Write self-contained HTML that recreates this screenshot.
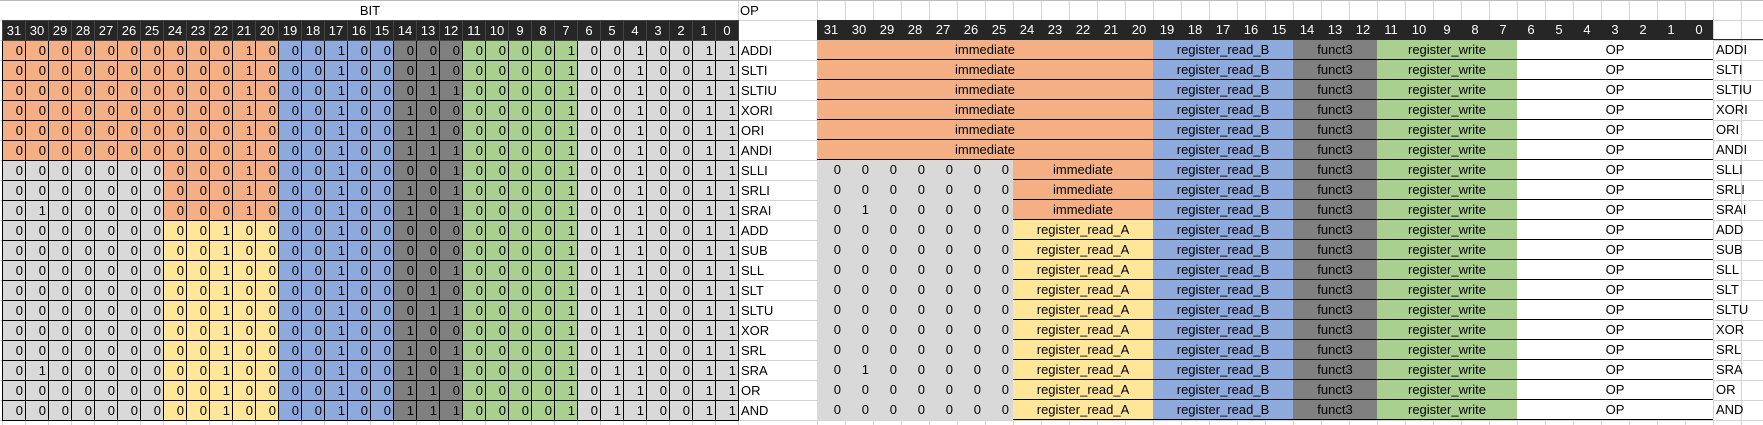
<!DOCTYPE html>
<html><head><meta charset="utf-8"><style>
body{margin:0;width:1763px;height:425px;overflow:hidden;position:relative;background:#fff;font-family:"Liberation Sans",sans-serif;font-size:13px;color:#000}
.g1{position:absolute;left:738px;top:0;width:79px;height:425px;background-image:linear-gradient(#d4d4d4 1px,transparent 1px),linear-gradient(90deg,#d4d4d4 1px,transparent 1px);background-size:79px 20px;background-position:0 0}
.g2{position:absolute;left:817px;top:0;width:946px;height:425px;background-image:linear-gradient(#d4d4d4 1px,transparent 1px),linear-gradient(90deg,#d4d4d4 1px,transparent 1px);background-size:28px 20px;background-position:0 0}
.g0{position:absolute;left:0;top:0;width:738px;height:425px;background-image:linear-gradient(#d4d4d4 1px,transparent 1px),linear-gradient(90deg,#d4d4d4 1px,transparent 1px);background-size:23px 20px;background-position:2px 0}
.top{position:absolute;left:2px;top:1px;width:736px;height:19px;background:#fff;text-align:center;line-height:19px}
.op{position:absolute;left:740px;top:1px;line-height:19px}
.tl{position:absolute;left:0;top:0;width:1763px;height:1px;background:#bbb}
table{position:absolute;border-collapse:collapse;table-layout:fixed}
#L{left:2px;top:20px}
#L td{width:20px;height:19px;padding:0 2px 0 0;box-sizing:content-box;border:1px solid #000;text-align:right;background:#d9d9d9;line-height:19px;overflow:hidden;white-space:nowrap}
#L tr.h td{background:#262626;color:#fff;text-align:center;padding:0;width:22px;border-color:#444}
#L td.lb{background:transparent;border:none;text-align:left;padding:0 0 0 2px;width:60px}
#L tr.h td.lb{background:transparent}
#L tr.i td:nth-child(-n+12),#L tr.s td:nth-child(n+8):nth-child(-n+12){background:#f4b084}
#L tr.r td:nth-child(n+8):nth-child(-n+12){background:#ffe699}
#L tr td:nth-child(n+13):nth-child(-n+17){background:#8ea9db}
#L tr td:nth-child(n+18):nth-child(-n+20){background:#808080}
#L tr td:nth-child(n+21):nth-child(-n+25){background:#a9d08e}
#L tr.h td:nth-child(-n+32){background:#262626}
#R{left:817px;top:20px}
#R td{height:19px;padding:0;border:none;border-bottom:1px solid #000;text-align:center;line-height:19px;white-space:nowrap;overflow:hidden}
#R tr.h td{background:#262626;color:#fff;width:28px;border-bottom:1px solid #262626}
#R tr.h td.lb{background:transparent}
#R td.lb{text-align:left;padding-left:3px;border-bottom:none;width:47px}
#R td.d{background:#d9d9d9;border-bottom-color:#d9d9d9;text-align:right;padding-right:4px;width:24px}
.o{background:#f4b084}.y{background:#ffe699}.b{background:#8ea9db}.k{background:#808080}.gr{background:#a9d08e}.w{background:#fff}
</style></head><body>
<div class="g0"></div><div class="g1"></div><div class="g2"></div><div class="tl"></div>
<div class="top">BIT</div><div class="op">OP</div>
<table id="L">
<tr class="h"><td>31<td>30<td>29<td>28<td>27<td>26<td>25<td>24<td>23<td>22<td>21<td>20<td>19<td>18<td>17<td>16<td>15<td>14<td>13<td>12<td>11<td>10<td>9<td>8<td>7<td>6<td>5<td>4<td>3<td>2<td>1<td>0<td class="lb"></td></tr>
<tr class="i"><td>0<td>0<td>0<td>0<td>0<td>0<td>0<td>0<td>0<td>0<td>1<td>0<td>0<td>0<td>1<td>0<td>0<td>0<td>0<td>0<td>0<td>0<td>0<td>0<td>1<td>0<td>0<td>1<td>0<td>0<td>1<td>1<td class="lb">ADDI</td></tr>
<tr class="i"><td>0<td>0<td>0<td>0<td>0<td>0<td>0<td>0<td>0<td>0<td>1<td>0<td>0<td>0<td>1<td>0<td>0<td>0<td>1<td>0<td>0<td>0<td>0<td>0<td>1<td>0<td>0<td>1<td>0<td>0<td>1<td>1<td class="lb">SLTI</td></tr>
<tr class="i"><td>0<td>0<td>0<td>0<td>0<td>0<td>0<td>0<td>0<td>0<td>1<td>0<td>0<td>0<td>1<td>0<td>0<td>0<td>1<td>1<td>0<td>0<td>0<td>0<td>1<td>0<td>0<td>1<td>0<td>0<td>1<td>1<td class="lb">SLTIU</td></tr>
<tr class="i"><td>0<td>0<td>0<td>0<td>0<td>0<td>0<td>0<td>0<td>0<td>1<td>0<td>0<td>0<td>1<td>0<td>0<td>1<td>0<td>0<td>0<td>0<td>0<td>0<td>1<td>0<td>0<td>1<td>0<td>0<td>1<td>1<td class="lb">XORI</td></tr>
<tr class="i"><td>0<td>0<td>0<td>0<td>0<td>0<td>0<td>0<td>0<td>0<td>1<td>0<td>0<td>0<td>1<td>0<td>0<td>1<td>1<td>0<td>0<td>0<td>0<td>0<td>1<td>0<td>0<td>1<td>0<td>0<td>1<td>1<td class="lb">ORI</td></tr>
<tr class="i"><td>0<td>0<td>0<td>0<td>0<td>0<td>0<td>0<td>0<td>0<td>1<td>0<td>0<td>0<td>1<td>0<td>0<td>1<td>1<td>1<td>0<td>0<td>0<td>0<td>1<td>0<td>0<td>1<td>0<td>0<td>1<td>1<td class="lb">ANDI</td></tr>
<tr class="s"><td>0<td>0<td>0<td>0<td>0<td>0<td>0<td>0<td>0<td>0<td>1<td>0<td>0<td>0<td>1<td>0<td>0<td>0<td>0<td>1<td>0<td>0<td>0<td>0<td>1<td>0<td>0<td>1<td>0<td>0<td>1<td>1<td class="lb">SLLI</td></tr>
<tr class="s"><td>0<td>0<td>0<td>0<td>0<td>0<td>0<td>0<td>0<td>0<td>1<td>0<td>0<td>0<td>1<td>0<td>0<td>1<td>0<td>1<td>0<td>0<td>0<td>0<td>1<td>0<td>0<td>1<td>0<td>0<td>1<td>1<td class="lb">SRLI</td></tr>
<tr class="s"><td>0<td>1<td>0<td>0<td>0<td>0<td>0<td>0<td>0<td>0<td>1<td>0<td>0<td>0<td>1<td>0<td>0<td>1<td>0<td>1<td>0<td>0<td>0<td>0<td>1<td>0<td>0<td>1<td>0<td>0<td>1<td>1<td class="lb">SRAI</td></tr>
<tr class="r"><td>0<td>0<td>0<td>0<td>0<td>0<td>0<td>0<td>0<td>1<td>0<td>0<td>0<td>0<td>1<td>0<td>0<td>0<td>0<td>0<td>0<td>0<td>0<td>0<td>1<td>0<td>1<td>1<td>0<td>0<td>1<td>1<td class="lb">ADD</td></tr>
<tr class="r"><td>0<td>0<td>0<td>0<td>0<td>0<td>0<td>0<td>0<td>1<td>0<td>0<td>0<td>0<td>1<td>0<td>0<td>0<td>0<td>0<td>0<td>0<td>0<td>0<td>1<td>0<td>1<td>1<td>0<td>0<td>1<td>1<td class="lb">SUB</td></tr>
<tr class="r"><td>0<td>0<td>0<td>0<td>0<td>0<td>0<td>0<td>0<td>1<td>0<td>0<td>0<td>0<td>1<td>0<td>0<td>0<td>0<td>1<td>0<td>0<td>0<td>0<td>1<td>0<td>1<td>1<td>0<td>0<td>1<td>1<td class="lb">SLL</td></tr>
<tr class="r"><td>0<td>0<td>0<td>0<td>0<td>0<td>0<td>0<td>0<td>1<td>0<td>0<td>0<td>0<td>1<td>0<td>0<td>0<td>1<td>0<td>0<td>0<td>0<td>0<td>1<td>0<td>1<td>1<td>0<td>0<td>1<td>1<td class="lb">SLT</td></tr>
<tr class="r"><td>0<td>0<td>0<td>0<td>0<td>0<td>0<td>0<td>0<td>1<td>0<td>0<td>0<td>0<td>1<td>0<td>0<td>0<td>1<td>1<td>0<td>0<td>0<td>0<td>1<td>0<td>1<td>1<td>0<td>0<td>1<td>1<td class="lb">SLTU</td></tr>
<tr class="r"><td>0<td>0<td>0<td>0<td>0<td>0<td>0<td>0<td>0<td>1<td>0<td>0<td>0<td>0<td>1<td>0<td>0<td>1<td>0<td>0<td>0<td>0<td>0<td>0<td>1<td>0<td>1<td>1<td>0<td>0<td>1<td>1<td class="lb">XOR</td></tr>
<tr class="r"><td>0<td>0<td>0<td>0<td>0<td>0<td>0<td>0<td>0<td>1<td>0<td>0<td>0<td>0<td>1<td>0<td>0<td>1<td>0<td>1<td>0<td>0<td>0<td>0<td>1<td>0<td>1<td>1<td>0<td>0<td>1<td>1<td class="lb">SRL</td></tr>
<tr class="r"><td>0<td>1<td>0<td>0<td>0<td>0<td>0<td>0<td>0<td>1<td>0<td>0<td>0<td>0<td>1<td>0<td>0<td>1<td>0<td>1<td>0<td>0<td>0<td>0<td>1<td>0<td>1<td>1<td>0<td>0<td>1<td>1<td class="lb">SRA</td></tr>
<tr class="r"><td>0<td>0<td>0<td>0<td>0<td>0<td>0<td>0<td>0<td>1<td>0<td>0<td>0<td>0<td>1<td>0<td>0<td>1<td>1<td>0<td>0<td>0<td>0<td>0<td>1<td>0<td>1<td>1<td>0<td>0<td>1<td>1<td class="lb">OR</td></tr>
<tr class="r"><td>0<td>0<td>0<td>0<td>0<td>0<td>0<td>0<td>0<td>1<td>0<td>0<td>0<td>0<td>1<td>0<td>0<td>1<td>1<td>1<td>0<td>0<td>0<td>0<td>1<td>0<td>1<td>1<td>0<td>0<td>1<td>1<td class="lb">AND</td></tr>
</table>
<table id="R">
<tr class="h"><td>31<td>30<td>29<td>28<td>27<td>26<td>25<td>24<td>23<td>22<td>21<td>20<td>19<td>18<td>17<td>16<td>15<td>14<td>13<td>12<td>11<td>10<td>9<td>8<td>7<td>6<td>5<td>4<td>3<td>2<td>1<td>0<td class="lb"></td></tr>
<tr><td colspan="12" class="o">immediate<td colspan="5" class="b">register_read_B<td colspan="3" class="k">funct3<td colspan="5" class="gr">register_write<td colspan="7" class="w">OP<td class="lb">ADDI</td></tr>
<tr><td colspan="12" class="o">immediate<td colspan="5" class="b">register_read_B<td colspan="3" class="k">funct3<td colspan="5" class="gr">register_write<td colspan="7" class="w">OP<td class="lb">SLTI</td></tr>
<tr><td colspan="12" class="o">immediate<td colspan="5" class="b">register_read_B<td colspan="3" class="k">funct3<td colspan="5" class="gr">register_write<td colspan="7" class="w">OP<td class="lb">SLTIU</td></tr>
<tr><td colspan="12" class="o">immediate<td colspan="5" class="b">register_read_B<td colspan="3" class="k">funct3<td colspan="5" class="gr">register_write<td colspan="7" class="w">OP<td class="lb">XORI</td></tr>
<tr><td colspan="12" class="o">immediate<td colspan="5" class="b">register_read_B<td colspan="3" class="k">funct3<td colspan="5" class="gr">register_write<td colspan="7" class="w">OP<td class="lb">ORI</td></tr>
<tr><td colspan="12" class="o">immediate<td colspan="5" class="b">register_read_B<td colspan="3" class="k">funct3<td colspan="5" class="gr">register_write<td colspan="7" class="w">OP<td class="lb">ANDI</td></tr>
<tr><td class="d">0<td class="d">0<td class="d">0<td class="d">0<td class="d">0<td class="d">0<td class="d">0<td colspan="5" class="o">immediate<td colspan="5" class="b">register_read_B<td colspan="3" class="k">funct3<td colspan="5" class="gr">register_write<td colspan="7" class="w">OP<td class="lb">SLLI</td></tr>
<tr><td class="d">0<td class="d">0<td class="d">0<td class="d">0<td class="d">0<td class="d">0<td class="d">0<td colspan="5" class="o">immediate<td colspan="5" class="b">register_read_B<td colspan="3" class="k">funct3<td colspan="5" class="gr">register_write<td colspan="7" class="w">OP<td class="lb">SRLI</td></tr>
<tr><td class="d">0<td class="d">1<td class="d">0<td class="d">0<td class="d">0<td class="d">0<td class="d">0<td colspan="5" class="o">immediate<td colspan="5" class="b">register_read_B<td colspan="3" class="k">funct3<td colspan="5" class="gr">register_write<td colspan="7" class="w">OP<td class="lb">SRAI</td></tr>
<tr><td class="d">0<td class="d">0<td class="d">0<td class="d">0<td class="d">0<td class="d">0<td class="d">0<td colspan="5" class="y">register_read_A<td colspan="5" class="b">register_read_B<td colspan="3" class="k">funct3<td colspan="5" class="gr">register_write<td colspan="7" class="w">OP<td class="lb">ADD</td></tr>
<tr><td class="d">0<td class="d">0<td class="d">0<td class="d">0<td class="d">0<td class="d">0<td class="d">0<td colspan="5" class="y">register_read_A<td colspan="5" class="b">register_read_B<td colspan="3" class="k">funct3<td colspan="5" class="gr">register_write<td colspan="7" class="w">OP<td class="lb">SUB</td></tr>
<tr><td class="d">0<td class="d">0<td class="d">0<td class="d">0<td class="d">0<td class="d">0<td class="d">0<td colspan="5" class="y">register_read_A<td colspan="5" class="b">register_read_B<td colspan="3" class="k">funct3<td colspan="5" class="gr">register_write<td colspan="7" class="w">OP<td class="lb">SLL</td></tr>
<tr><td class="d">0<td class="d">0<td class="d">0<td class="d">0<td class="d">0<td class="d">0<td class="d">0<td colspan="5" class="y">register_read_A<td colspan="5" class="b">register_read_B<td colspan="3" class="k">funct3<td colspan="5" class="gr">register_write<td colspan="7" class="w">OP<td class="lb">SLT</td></tr>
<tr><td class="d">0<td class="d">0<td class="d">0<td class="d">0<td class="d">0<td class="d">0<td class="d">0<td colspan="5" class="y">register_read_A<td colspan="5" class="b">register_read_B<td colspan="3" class="k">funct3<td colspan="5" class="gr">register_write<td colspan="7" class="w">OP<td class="lb">SLTU</td></tr>
<tr><td class="d">0<td class="d">0<td class="d">0<td class="d">0<td class="d">0<td class="d">0<td class="d">0<td colspan="5" class="y">register_read_A<td colspan="5" class="b">register_read_B<td colspan="3" class="k">funct3<td colspan="5" class="gr">register_write<td colspan="7" class="w">OP<td class="lb">XOR</td></tr>
<tr><td class="d">0<td class="d">0<td class="d">0<td class="d">0<td class="d">0<td class="d">0<td class="d">0<td colspan="5" class="y">register_read_A<td colspan="5" class="b">register_read_B<td colspan="3" class="k">funct3<td colspan="5" class="gr">register_write<td colspan="7" class="w">OP<td class="lb">SRL</td></tr>
<tr><td class="d">0<td class="d">1<td class="d">0<td class="d">0<td class="d">0<td class="d">0<td class="d">0<td colspan="5" class="y">register_read_A<td colspan="5" class="b">register_read_B<td colspan="3" class="k">funct3<td colspan="5" class="gr">register_write<td colspan="7" class="w">OP<td class="lb">SRA</td></tr>
<tr><td class="d">0<td class="d">0<td class="d">0<td class="d">0<td class="d">0<td class="d">0<td class="d">0<td colspan="5" class="y">register_read_A<td colspan="5" class="b">register_read_B<td colspan="3" class="k">funct3<td colspan="5" class="gr">register_write<td colspan="7" class="w">OP<td class="lb">OR</td></tr>
<tr><td class="d">0<td class="d">0<td class="d">0<td class="d">0<td class="d">0<td class="d">0<td class="d">0<td colspan="5" class="y">register_read_A<td colspan="5" class="b">register_read_B<td colspan="3" class="k">funct3<td colspan="5" class="gr">register_write<td colspan="7" class="w">OP<td class="lb">AND</td></tr>
</table>
</body></html>
